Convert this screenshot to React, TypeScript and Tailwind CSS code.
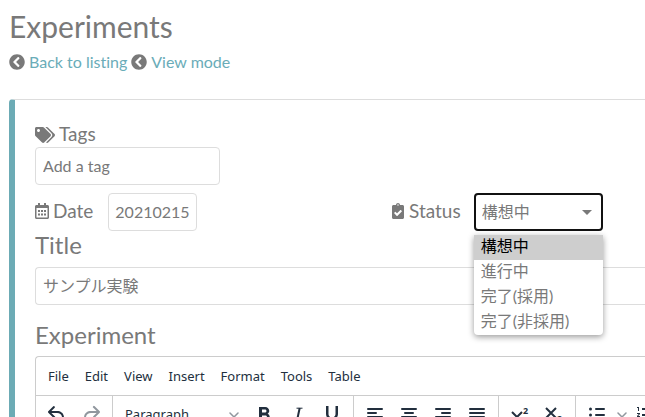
import { useState, type ReactNode } from "react";
import {
  FaChevronCircleLeft,
  FaClipboardCheck,
  FaTags,
} from "react-icons/fa";
import {
  MdFormatBold,
  MdFormatListNumbered,
  MdFormatUnderlined,
} from "react-icons/md";

const statuses = ["構想中", "進行中", "完了(採用)", "完了(非採用)"];
const menus = ["File", "Edit", "View", "Insert", "Format", "Tools", "Table"];

type ToolButtonProps = {
  label: string;
  disabled?: boolean;
  children: ReactNode;
};

function ToolButton({ label, disabled = false, children }: ToolButtonProps) {
  return (
    <button
      type="button"
      aria-label={label}
      disabled={disabled}
      className="flex h-[34px] w-[34px] shrink-0 items-center justify-center rounded-sm text-[#222f3e] disabled:text-[#222f3e]/50"
    >
      {children}
    </button>
  );
}

function ToolGroup({ children }: { children: ReactNode }) {
  return (
    <div className="flex shrink-0 border-r border-[#cccccc] px-1 pt-0.5 pb-1">
      {children}
    </div>
  );
}

function ToolIcon({ d }: { d: string }) {
  return (
    <svg width="24" height="24" viewBox="0 0 24 24" fill="currentColor">
      <path d={d} fillRule="evenodd" />
    </svg>
  );
}

function Lines({ short }: { short: string }) {
  return (
    <svg
      width="24"
      height="24"
      viewBox="0 0 24 24"
      fill="none"
      stroke="currentColor"
      strokeWidth="2"
      strokeLinecap="round"
    >
      <path d={`M5 6h14M${short}M5 14h14M${short.replace(" 10", " 18")}`} />
    </svg>
  );
}

function Chevron() {
  return (
    <svg
      width="10"
      height="10"
      viewBox="0 0 10 10"
      fill="none"
      stroke="currentColor"
      strokeWidth="1.5"
      strokeLinecap="round"
      strokeLinejoin="round"
      className="shrink-0 text-[#222f3e]/50"
    >
      <path d="M1 3l4 4 4-4" />
    </svg>
  );
}

function CalendarIcon() {
  return (
    <svg width="14" height="16" viewBox="0 0 14 16" fill="currentColor">
      <path
        fillRule="evenodd"
        d="M3 .4c0-.2.2-.4.4-.4h1.2c.2 0 .4.2.4.4V2h4V.4c0-.2.2-.4.4-.4h1.2c.2 0 .4.2.4.4V2h1.5c.8 0 1.5.7 1.5 1.5v11c0 .8-.7 1.5-1.5 1.5h-11C.7 16 0 15.3 0 14.5v-11C0 2.7.7 2 1.5 2H3zM1.5 5v9.3c0 .1.1.2.2.2h10.6c.1 0 .2-.1.2-.2V5z"
      />
      <path d="M3 7h2v2H3zM6 7h2v2H6zM9 7h2v2H9zM3 10.500h2v2H3zM6 10.500h2v2H6zM9 10.500h2v2H9z" />
    </svg>
  );
}

function StatusSelect() {
  const [status, setStatus] = useState(statuses[0]);

  return (
    <div className="relative w-[129px]">
      <select
        id="status"
        value={status}
        onChange={(e) => setStatus(e.target.value)}
        className="h-[38px] w-full appearance-none rounded border-2 border-[#111111] bg-white px-1.5 text-base outline-none"
      >
        {statuses.map((name) => (
          <option key={name}>{name}</option>
        ))}
      </select>
      <svg
        width="10"
        height="5"
        viewBox="0 0 10 5"
        fill="currentColor"
        className="pointer-events-none absolute top-[17px] right-[11px]"
      >
        <path d="M0 0h10L5 5z" />
      </svg>
      <ul
        role="listbox"
        aria-label="Status"
        className="absolute top-full left-0 z-10 mt-1 w-full overflow-hidden rounded-b-sm bg-white shadow-[0_2px_6px_rgba(0,0,0,0.4)]"
      >
        {statuses.map((name) => (
          <li
            key={name}
            role="option"
            aria-selected={name === status}
            onClick={() => setStatus(name)}
            className="h-[25px] px-[7px] leading-[22px] aria-selected:bg-[#cecece] aria-selected:text-black"
          >
            {name}
          </li>
        ))}
      </ul>
    </div>
  );
}

function Editor() {
  return (
    <div className="overflow-hidden rounded-tl border-t border-l border-[#cccccc] font-['Noto_Sans','Open_Sans',sans-serif] text-[#222f3e]">
      <div className="flex h-[39px] items-center gap-4 border-b border-[#cccccc] px-3 pt-0.5 text-[13px]">
        {menus.map((name) => (
          <button key={name} type="button">
            {name}
          </button>
        ))}
      </div>
      <div className="flex">
        <ToolGroup>
          <ToolButton label="Undo">
            <ToolIcon d="M6.4 8H12c3.7 0 6.2 2 6.8 5.1.6 2.7-.4 5.6-2.3 6.8a1 1 0 01-1-1.8c1.1-.6 1.8-2.7 1.4-4.6-.5-2.1-2.1-3.5-4.9-3.5H6.4l3.3 3.3a1 1 0 11-1.4 1.4l-5-5a1 1 0 010-1.4l5-5a1 1 0 011.4 1.4L6.4 8z" />
          </ToolButton>
          <ToolButton label="Redo" disabled>
            <ToolIcon d="M17.6 10H12c-2.8 0-4.4 1.4-4.9 3.5-.4 2 .3 4 1.4 4.6a1 1 0 11-1 1.8c-2-1.2-2.9-4.1-2.3-6.8.6-3 3-5.1 6.8-5.1h5.6l-3.3-3.3a1 1 0 111.4-1.4l5 5a1 1 0 010 1.4l-5 5a1 1 0 01-1.4-1.4l3.3-3.3z" />
          </ToolButton>
        </ToolGroup>
        <ToolGroup>
          <button
            type="button"
            className="flex h-[34px] w-[130px] shrink-0 items-center justify-between px-2 text-[13px]"
          >
            Paragraph
            <Chevron />
          </button>
          <ToolButton label="Bold">
            <MdFormatBold size={24} />
          </ToolButton>
          <ToolButton label="Italic">
            <svg
              width="24"
              height="24"
              viewBox="0 0 24 24"
              fill="none"
              stroke="currentColor"
            >
              <path d="M10.500 5.200h6M8 18.800h6" />
              <path d="M13.700 5l-3 14" strokeWidth="2" />
            </svg>
          </ToolButton>
          <ToolButton label="Underline">
            <MdFormatUnderlined size={24} />
          </ToolButton>
        </ToolGroup>
        <ToolGroup>
          <ToolButton label="Align left">
            <Lines short="5 10h8" />
          </ToolButton>
          <ToolButton label="Align center">
            <Lines short="8 10h8" />
          </ToolButton>
          <ToolButton label="Align right">
            <Lines short="11 10h8" />
          </ToolButton>
          <ToolButton label="Justify">
            <Lines short="5 10h14" />
          </ToolButton>
        </ToolGroup>
        <ToolGroup>
          <ToolButton label="Superscript">
            <svg width="24" height="24" viewBox="0 0 24 24" stroke="currentColor">
              <path d="M4 9l10 10M14 9L4 19" strokeWidth="2" />
              <text x="15" y="11" fontSize="9" fontWeight="700" stroke="none" fill="currentColor">
                2
              </text>
            </svg>
          </ToolButton>
          <ToolButton label="Subscript">
            <svg width="24" height="24" viewBox="0 0 24 24" stroke="currentColor">
              <path d="M4 5l10 10M14 5L4 15" strokeWidth="2" />
              <text x="15" y="19" fontSize="9" fontWeight="700" stroke="none" fill="currentColor">
                2
              </text>
            </svg>
          </ToolButton>
        </ToolGroup>
        <ToolGroup>
          <ToolButton label="Bullet list">
            <svg
              width="24"
              height="24"
              viewBox="0 0 24 24"
              fill="none"
              stroke="currentColor"
              strokeWidth="2"
              strokeLinecap="round"
            >
              <path d="M11 6h8M11 12h8M11 18h8" />
              <path d="M5.5 6h0M5.5 12h0M5.5 18h0" strokeWidth="3" />
            </svg>
          </ToolButton>
          <button
            type="button"
            aria-label="Bullet list styles"
            className="flex h-[34px] w-4 items-center justify-center"
          >
            <Chevron />
          </button>
          <ToolButton label="Numbered list">
            <MdFormatListNumbered size={24} />
          </ToolButton>
        </ToolGroup>
      </div>
    </div>
  );
}

function App() {
  return (
    <div className="h-screen overflow-hidden bg-white pl-[9px] font-['Lato','Noto_Sans_CJK_JP',sans-serif] text-base text-[#797979] [font-variant-ligatures:none]">
      <h1 className="pt-2 text-3xl leading-9">Experiments</h1>
      <nav className="mt-1.5 flex h-6 items-center gap-1">
        <FaChevronCircleLeft size={16} />
        <a href="#listing" className="text-[#6aacb8]">
          Back to listing
        </a>
        <FaChevronCircleLeft size={16} />
        <a href="#view" className="text-[#6aacb8]">
          View mode
        </a>
      </nav>

      <main className="mt-[25px] rounded-l border-t border-l-6 border-t-[#dddddd] border-l-[#6cabb5] pt-[22px] pl-5">
        <label
          htmlFor="tag"
          className="flex h-[25px] items-center gap-1 text-[19px]"
        >
          <FaTags size={20} />
          Tags
        </label>
        <input
          id="tag"
          type="text"
          placeholder="Add a tag"
          className="block h-[38px] w-[185px] rounded border border-[#dddddd] px-[7px] pb-0.5 placeholder:text-[#797979]"
        />

        <div className="mt-2 grid grid-cols-[356px_1fr]">
          <div className="flex items-center">
            <label
              htmlFor="date"
              className="mr-[15px] flex items-center gap-1 pb-0.5 text-[19px]"
            >
              <CalendarIcon />
              Date
            </label>
            <input
              id="date"
              type="text"
              defaultValue="20210215"
              className="h-[38px] w-[89px] rounded border border-[#dddddd] px-1.5 pb-0.5"
            />
          </div>
          <div className="flex items-center">
            <label
              htmlFor="status"
              className="mr-[13px] flex items-center gap-1 pb-0.5 text-[19px]"
            >
              <FaClipboardCheck className="h-4 w-3.5" />
              Status
            </label>
            <StatusSelect />
          </div>
        </div>

        <label htmlFor="title" className="block h-9 text-2xl leading-7">
          Title
        </label>
        <input
          id="title"
          type="text"
          defaultValue="サンプル実験"
          className="block h-[38px] w-full rounded-l border border-r-0 border-[#dddddd] px-[7px] pb-0.5"
        />

        <h2 className="mt-3.5 h-[37px] text-2xl leading-8">Experiment</h2>
        <Editor />
      </main>
    </div>
  );
}

export default App;
